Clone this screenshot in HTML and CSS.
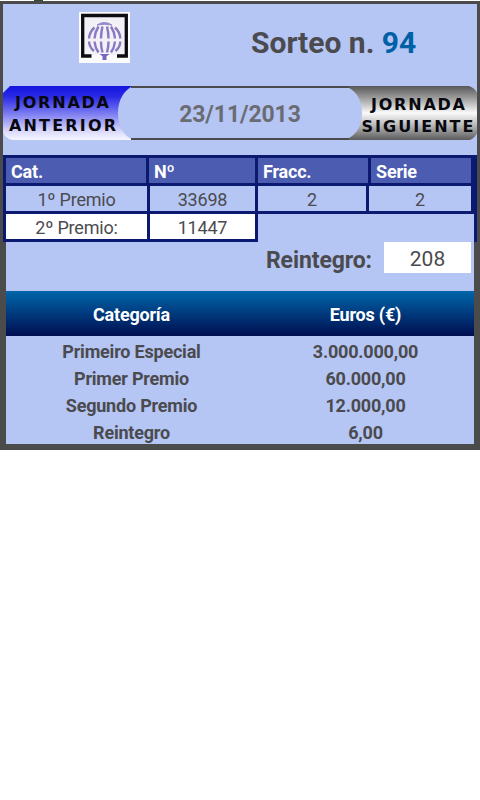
FILE: index.html
```html
<!DOCTYPE html>
<html lang="es">

<head>
  <meta charset="UTF-8" />
  <meta name="viewport" content="width=device-width, initial-scale=1.0" />
  <title>Sorteo n. 94</title>
  <link rel="stylesheet" href="styles.css">
</head>

<body>
  <span class="corner"></span>
  <div class="frame">
    <div class="top">
      <svg class="logo" width="51" height="51" viewBox="0 0 51 51">
        <rect width="51" height="51" fill="#fbfbfd" />
        <rect x="5" y="5" width="41" height="38" fill="#f1f1f6" />
        <path d="M12.500 44H3.700V3.500h43.600v40.500h-9.300" fill="none" stroke="#0c0c12" stroke-width="3.300" />
        <path d="M18 13Q25.500 8 33 13Q25.500 11.500 18 13Z" fill="#9687c6" stroke="#9687c6" />
        <g fill="none" stroke="#8b78c4" stroke-width="2.400">
          <path d="M15.500 15.500Q10.500 20 10 26.500M19.500 14.500Q16 20 15.500 26.500M23.500 14.500Q22 20 22 26.500M28 14.500Q29.500 20 29.500 26.500M32 14.500Q35.500 20 36 26.500M36 15.500Q41 20 41.300 26.500" />
          <path d="M10 29.500Q10.500 35.500 15 39M15.500 29.500Q16 35.500 19.500 40.500M22 29.500Q22 35.500 23.500 40.500M29.500 29.500Q29.500 35.500 28 40.500M36 29.500Q35.500 35.500 32 40.500M41.300 29.500Q41 35.500 36.500 39" />
        </g>
        <path d="M20.500 42h10l-3 2.300V48h-4v-3.700z" fill="#7965bd" />
      </svg>
      <h1 class="title">Sorteo n. <span class="num">94</span></h1>
    </div>

    <div class="nav">
      <svg class="btn" width="128" height="54" viewBox="0 0 128 54">
        <defs>
          <linearGradient id="prev" x2="0" y2="1">
            <stop offset="0" stop-color="#1414df" />
            <stop offset=".2" stop-color="#2a2ae6" />
            <stop offset=".55" stop-color="#8686f2" />
            <stop offset=".85" stop-color="#dcdcfb" />
            <stop offset="1" stop-color="#f6f6ff" />
          </linearGradient>
        </defs>
        <path d="M7 0H128V1C121 5 115 14 115 27C115 40 120 48 128 53V54H9Q2 52 0 46V7Z" fill="url(#prev)" />
        <text x="12" y="22" textLength="94">JORNADA</text>
        <text x="6" y="44.500" textLength="107">ANTERIOR</text>
      </svg>
      <div class="date">23/11/2013</div>
      <svg class="btn" width="128" height="54" viewBox="0 0 128 54">
        <defs>
          <linearGradient id="next" x2="0" y2="1">
            <stop offset="0" stop-color="#575757" />
            <stop offset=".25" stop-color="#a5a5a5" />
            <stop offset=".5" stop-color="#fafafa" />
            <stop offset=".75" stop-color="#b0b0b0" />
            <stop offset="1" stop-color="#5c5c5c" />
          </linearGradient>
        </defs>
        <path d="M0 0H120Q126 2 128 7V47Q126 52 121 54H0V52C8 48 13 39 13 27C13 15 8 6 0 2Z" fill="url(#next)" />
        <text x="22" y="23.500" textLength="94">JORNADA</text>
        <text x="12.500" y="46" textLength="112">SIGUIENTE</text>
      </svg>
    </div>

    <div class="results">
      <div class="row head">
        <div class="cell">Cat.</div>
        <div class="cell">Nº</div>
        <div class="cell">Fracc.</div>
        <div class="cell">Serie</div>
      </div>
      <div class="row first">
        <div class="cell">1º Premio</div>
        <div class="cell">33698</div>
        <div class="cell">2</div>
        <div class="cell">2</div>
      </div>
      <div class="row second">
        <div class="cell">2º Premio:</div>
        <div class="cell">11447</div>
        <div class="blank"></div>
      </div>
    </div>

    <div class="bottom">
      <div class="refund">
        <span class="label">Reintegro:</span>
        <span class="value">208</span>
      </div>
      <div class="prizes">
        <div class="prize prize-head"><span>Categoría</span><span>Euros (€)</span></div>
        <div class="prize-list">
          <div class="prize"><span>Primeiro Especial</span><span>3.000.000,00</span></div>
          <div class="prize"><span>Primer Premio</span><span>60.000,00</span></div>
          <div class="prize"><span>Segundo Premio</span><span>12.000,00</span></div>
          <div class="prize"><span>Reintegro</span><span>6,00</span></div>
        </div>
      </div>
    </div>
  </div>
</body>

</html>
```
FILE: styles.css
```css
* {
  box-sizing: border-box;
}

body {
  margin: 0;
  padding-top: 1px;
  background-color: #fff;
  font-family: Roboto, sans-serif;
  color: #4b4b4f;
}

.corner {
  position: absolute;
  top: 0;
  left: 34px;
  width: 9px;
  height: 1px;
  background-color: #2f4a2f;
}

.frame {
  height: 449px;
  padding: 3px 3px 6px;
  background-color: #4b4b4b;
}

.top {
  display: flex;
  height: 82px;
  padding: 8px 0 0 76px;
  background-color: #b5c5f4;
}

.title {
  margin: 12px 0 0 121px;
  font-size: 30px;
  line-height: 38px;
  font-weight: bold;
  white-space: nowrap;
}

.title .num {
  color: #0060a5;
}

.nav {
  display: flex;
  height: 69px;
  padding-bottom: 15px;
  background-color: #b5c5f4;
}

.btn {
  flex: none;
  font-family: "DejaVu Sans", sans-serif;
  font-size: 16px;
  font-weight: bold;
  fill: #08080f;
}

.date {
  flex: 1;
  border-top: 2px solid #4b4b4b;
  border-bottom: 2px solid #4b4b4b;
  font-size: 23px;
  line-height: 53px;
  font-weight: bold;
  letter-spacing: -0.1px;
  text-align: center;
  color: #6b6c72;
}

.results {
  padding: 3px 0 3px 3px;
  background-color: #0b1a70;
}

.row {
  display: grid;
  grid-template-rows: 25px;
  column-gap: 3px;
  height: 25px;
  margin-bottom: 3px;
  font-size: 18px;
  line-height: 27px;
  letter-spacing: -0.2px;
  text-align: center;
}

.head {
  grid-template-columns: 140px 106px 110px 100px;
  font-weight: bold;
  text-align: left;
  color: #fff;
}

.head .cell {
  padding-left: 5px;
  background-color: #4c5cb0;
}

.first {
  grid-template-columns: 141px 105px 108px 102px;
}

.first .cell {
  background-color: #b5c5f4;
}

.second {
  grid-template-columns: 141px 105px 216px;
  margin-bottom: 0;
}

.second .cell {
  background-color: #fff;
}

.second .blank {
  height: 28px;
  background-color: #b5c5f4;
}

.bottom {
  height: 202px;
  margin: 0 3px;
  background-color: #b5c5f4;
}

.refund {
  display: flex;
  justify-content: flex-end;
  height: 49px;
  padding-right: 3px;
}

.refund .label {
  margin-right: 12px;
  font-size: 23px;
  line-height: 37px;
  font-weight: bold;
  letter-spacing: -0.1px;
}

.refund .value {
  width: 87px;
  height: 31px;
  background-color: #fff;
  font-size: 21px;
  line-height: 34px;
  text-align: center;
}

.prize {
  display: grid;
  grid-template-columns: 251px 217px;
  font-size: 18px;
  line-height: 27px;
  font-weight: bold;
  letter-spacing: -0.2px;
  text-align: center;
}

.prize-head {
  height: 45px;
  line-height: 47px;
  background: linear-gradient(#0065aa, #000f50);
  color: #fff;
}

.prize-list {
  padding-top: 2px;
}
```
